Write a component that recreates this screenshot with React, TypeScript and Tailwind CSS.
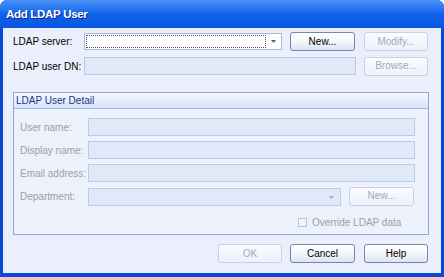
import React from 'react';

const font = { fontFamily: '"Liberation Sans", Arial, sans-serif' };

function Btn({ label, disabled, w = 'w-[65px]' }: { label: string; disabled?: boolean; w?: string }) {
  return (
    <button
      type="button"
      className={`${w} h-[19px] shrink-0 rounded-[3px] border text-[10px] leading-none ${
        disabled
          ? 'border-[#C5D1EA] bg-gradient-to-b from-[#FBFCFF] to-[#EDF1FA] text-[#A3AAB8]'
          : 'border-[#7086B4] bg-gradient-to-b from-[#FFFFFF] via-[#F4F6FB] to-[#DCE3F1] text-black'
      }`}
    >
      {label}
    </button>
  );
}

function Arrow({ color }: { color: string }) {
  return (
    <svg width="5" height="3" viewBox="0 0 5 3" className="shrink-0">
      <path d="M0 0h5L2.5 3z" fill={color} />
    </svg>
  );
}

function Field({ w }: { w: string }) {
  return <div className={`${w} h-[18px] shrink-0 border border-[#B9CAEA] bg-[#E1E8F8]`} />;
}

export default function App() {
  return (
    <div className="w-[444px] h-[277px] bg-white" style={font}>
      <div className="flex h-full w-full flex-col overflow-hidden rounded-t-[7px] bg-[#0A48D6]">
        {/* title bar */}
        <div className="flex h-[28px] shrink-0 items-center bg-gradient-to-b from-[#4B93F8] via-[#1062EC] to-[#0A55E0] pl-[6px] pt-[2px]">
          <span className="whitespace-nowrap text-[11.5px] font-bold tracking-[-0.3px] text-white [text-shadow:1px_1px_0_#0A2A8A]">
            Add LDAP User
          </span>
        </div>

        {/* body */}
        <div className="mx-[3px] mb-[4px] flex flex-1 flex-col whitespace-nowrap bg-[#EBEFFB] pl-[10px] pt-[4px] text-[10px] text-black">
          {/* row 1 */}
          <div className="flex h-[19px] items-center">
            <span className="w-[71px] shrink-0">LDAP server:</span>
            <div className="flex h-[17px] w-[198px] shrink-0 items-center border border-[#A5B9DD] bg-white p-[1px]">
              <div className="h-full flex-1 border border-dotted border-[#555]" />
              <div className="flex w-[14px] justify-center">
                <Arrow color="#4B5F8C" />
              </div>
            </div>
            <div className="ml-[8px]">
              <Btn label="New..." />
            </div>
            <div className="ml-[9px]">
              <Btn label="Modify..." disabled w="w-[64px]" />
            </div>
          </div>

          {/* row 2 */}
          <div className="mt-[5px] flex h-[20px] items-center">
            <span className="w-[71px] shrink-0">LDAP user DN:</span>
            <Field w="w-[272px]" />
            <div className="ml-[8px]">
              <Btn label="Browse..." disabled w="w-[64px]" />
            </div>
          </div>

          {/* group */}
          <div className="mt-[16px] flex h-[143px] w-[416px] flex-col border border-[#8EA8D8] bg-[#EDF1FC]">
            <div className="flex h-[16px] shrink-0 items-center border-b border-[#9DB5E2] bg-gradient-to-b from-[#F6F9FF] to-[#D6E3FA] pl-[2px] text-[#1A3580]">
              LDAP User Detail
            </div>
            <div className="flex flex-col pl-[6px] pt-[9px] text-[#9BA0A8]">
              {['User name:', 'Display name:', 'Email address:'].map((l, i) => (
                <div key={l} className={`flex h-[18px] items-center ${i ? 'mt-[5px]' : ''}`}>
                  <span className="w-[68px] shrink-0">{l}</span>
                  <Field w="w-[327px]" />
                </div>
              ))}
              <div className="mt-[4px] flex h-[20px] items-center">
                <span className="w-[68px] shrink-0">Department:</span>
                <div className="mt-[2px] flex h-[18px] w-[253px] shrink-0 items-center justify-end border border-[#B9CAEA] bg-[#E1E8F8] pr-[6px]">
                  <Arrow color="#A8B0C2" />
                </div>
                <div className="ml-[8px]">
                  <Btn label="New..." disabled />
                </div>
              </div>
              <div className="mt-[9px] flex items-center pl-[278px]">
                <div className="h-[9px] w-[9px] border border-[#B7C4DC] bg-[#F1F4FA]" />
                <span className="ml-[5px]">Override LDAP data</span>
              </div>
            </div>
          </div>

          {/* bottom buttons */}
          <div className="mt-[9px] flex items-center pl-[205px]">
            <Btn label="OK" disabled w="w-[64px]" />
            <div className="ml-[8px]">
              <Btn label="Cancel" />
            </div>
            <div className="ml-[9px]">
              <Btn label="Help" w="w-[64px]" />
            </div>
          </div>
        </div>
      </div>
    </div>
  );
}
